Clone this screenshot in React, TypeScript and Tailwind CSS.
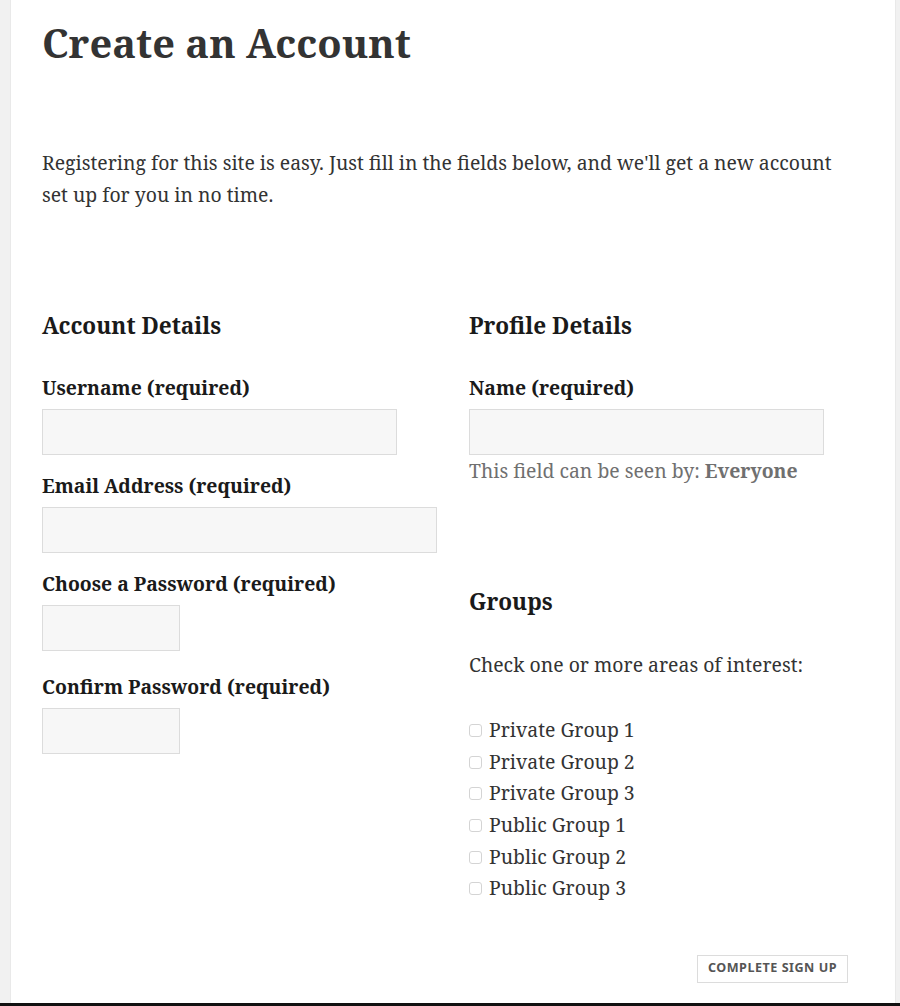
import React from 'react';

/**
 * SignupPage — halaman "Create an Account" (gaya tema Twenty Fifteen).
 * Dua kolom: Account Details (kiri) dan Profile Details + Groups (kanan).
 */

const SERIF = "font-['Noto_Serif','DejaVu_Serif','Liberation_Serif',serif]";

const GROUPS = [
  'Private Group 1',
  'Private Group 2',
  'Private Group 3',
  'Public Group 1',
  'Public Group 2',
  'Public Group 3',
];

function Label({ children, className = '' }: { children: React.ReactNode; className?: string }) {
  return (
    <label className={`block text-[19.4px] leading-[28px] font-bold text-[#1a1a1a] ${className}`}>
      {children}
    </label>
  );
}

function Field({ width }: { width: string }) {
  return (
    <input
      type="text"
      className={`block h-[46px] ${width} mt-[7px] bg-[#f7f7f7] border border-[#dcdcdc] outline-none`}
    />
  );
}

export default function App() {
  return (
    <div className={`h-[1006px] flex flex-col bg-[#f1f1f1] ${SERIF} text-[#333]`}>
      <div className="flex flex-1">
        <div className="w-[11px] shrink-0" />
        <main className="flex-1 mr-[5px] bg-white shadow-[0_0_1px_rgba(0,0,0,0.2)] pl-[31px] pr-[42px]">
          <h1 className="mt-[19px] text-[39.8px] leading-[48px] font-bold text-[#333]">Create an Account</h1>

          <p className="mt-[80px] max-w-[800px] text-[19.4px] leading-[32px] text-[#333]">
            Registering for this site is easy. Just fill in the fields below, and we'll get a new account set up for you in no time.
          </p>

          <div className="mt-[99px] flex">
            {/* kolom kiri — account details */}
            <div className="w-[427px] shrink-0">
              <h2 className="text-[22.6px] leading-[32px] font-bold text-[#1a1a1a]">Account Details</h2>
              <Label className="mt-[32px]">Username (required)</Label>
              <Field width="w-[355px]" />
              <Label className="mt-[17px]">Email Address (required)</Label>
              <Field width="w-[395px]" />
              <Label className="mt-[17px]">Choose a Password (required)</Label>
              <Field width="w-[138px]" />
              <Label className="mt-[22px]">Confirm Password (required)</Label>
              <Field width="w-[138px]" />
            </div>

            {/* kolom kanan — profile details + groups */}
            <div className="flex-1">
              <h2 className="text-[22.6px] leading-[32px] font-bold text-[#1a1a1a]">Profile Details</h2>
              <Label className="mt-[32px]">Name (required)</Label>
              <Field width="w-[355px]" />
              <p className="mt-[2px] text-[19.4px] leading-[28px] text-[#707070]">
                This field can be seen by: <strong className="font-bold">Everyone</strong>
              </p>

              <h2 className="mt-[101px] text-[22.6px] leading-[32px] font-bold text-[#1a1a1a]">Groups</h2>
              <p className="mt-[33px] text-[19.4px] leading-[28px] text-[#333]">Check one or more areas of interest:</p>

              <ul className="mt-[35px]">
                {GROUPS.map((g) => (
                  <li key={g} className="flex items-center h-[31.6px] text-[19.4px] text-[#333]">
                    <span className="w-[13px] h-[13px] mt-[2px] mr-[7px] rounded-[3px] border border-[#d4d4d4] bg-white shrink-0" />
                    {g}
                  </li>
                ))}
              </ul>
            </div>
          </div>

          <div className="mt-[51px] flex justify-end pr-[5px]">
            <button className="h-[28px] px-[10px] border border-[#dcdcdc] bg-white text-[12.6px] font-bold tracking-[0.04em] uppercase text-[#555] font-['Noto_Sans','Open_Sans',sans-serif]">
              Complete Sign Up
            </button>
          </div>
        </main>
      </div>
      <div className="h-[3px] bg-[#111]" />
    </div>
  );
}
